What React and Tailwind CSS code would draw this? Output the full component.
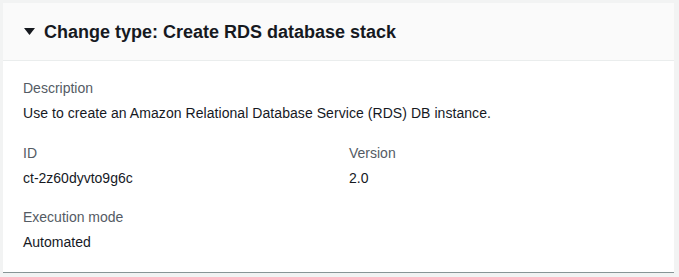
export default function App() {
  return (
    <div className="w-[679px] h-[277px] bg-[#f2f3f3] p-[3px] pr-[5px]" style={{ fontFamily: '"Liberation Sans", Arial, sans-serif' }}>
      <div className="bg-white border-b border-[#879596]">
        <div className="h-[58px] bg-[#fafafa] border-b border-[#eaeded] flex items-center pl-[21px]">
          <svg width="11" height="8" viewBox="0 0 11 8" className="mr-[9px] mt-[1px]">
            <polygon points="0,0 11,0 5.5,7" fill="#16191f" />
          </svg>
          <h2 className="text-[18px] font-bold text-[#16191f] leading-none mt-[1px]">Change type: Create RDS database stack</h2>
        </div>
        <div className="pl-[20px] pt-[17px] pb-[20px] text-[14px] leading-[20px]">
          <div>
            <div className="text-[#545b64]">Description</div>
            <div className="text-[#16191f] mt-[5px] tracking-[0.06px]">Use to create an Amazon Relational Database Service (RDS) DB instance.</div>
          </div>
          <div className="grid grid-cols-[326px_1fr] mt-[20px]">
            <div>
              <div className="text-[#545b64]">ID</div>
              <div className="text-[#16191f] mt-[5px]">ct-2z60dyvto9g6c</div>
            </div>
            <div>
              <div className="text-[#545b64]">Version</div>
              <div className="text-[#16191f] mt-[5px]">2.0</div>
            </div>
          </div>
          <div className="mt-[19px]">
            <div className="text-[#545b64]">Execution mode</div>
            <div className="text-[#16191f] mt-[5px]">Automated</div>
          </div>
        </div>
      </div>
    </div>
  );
}
